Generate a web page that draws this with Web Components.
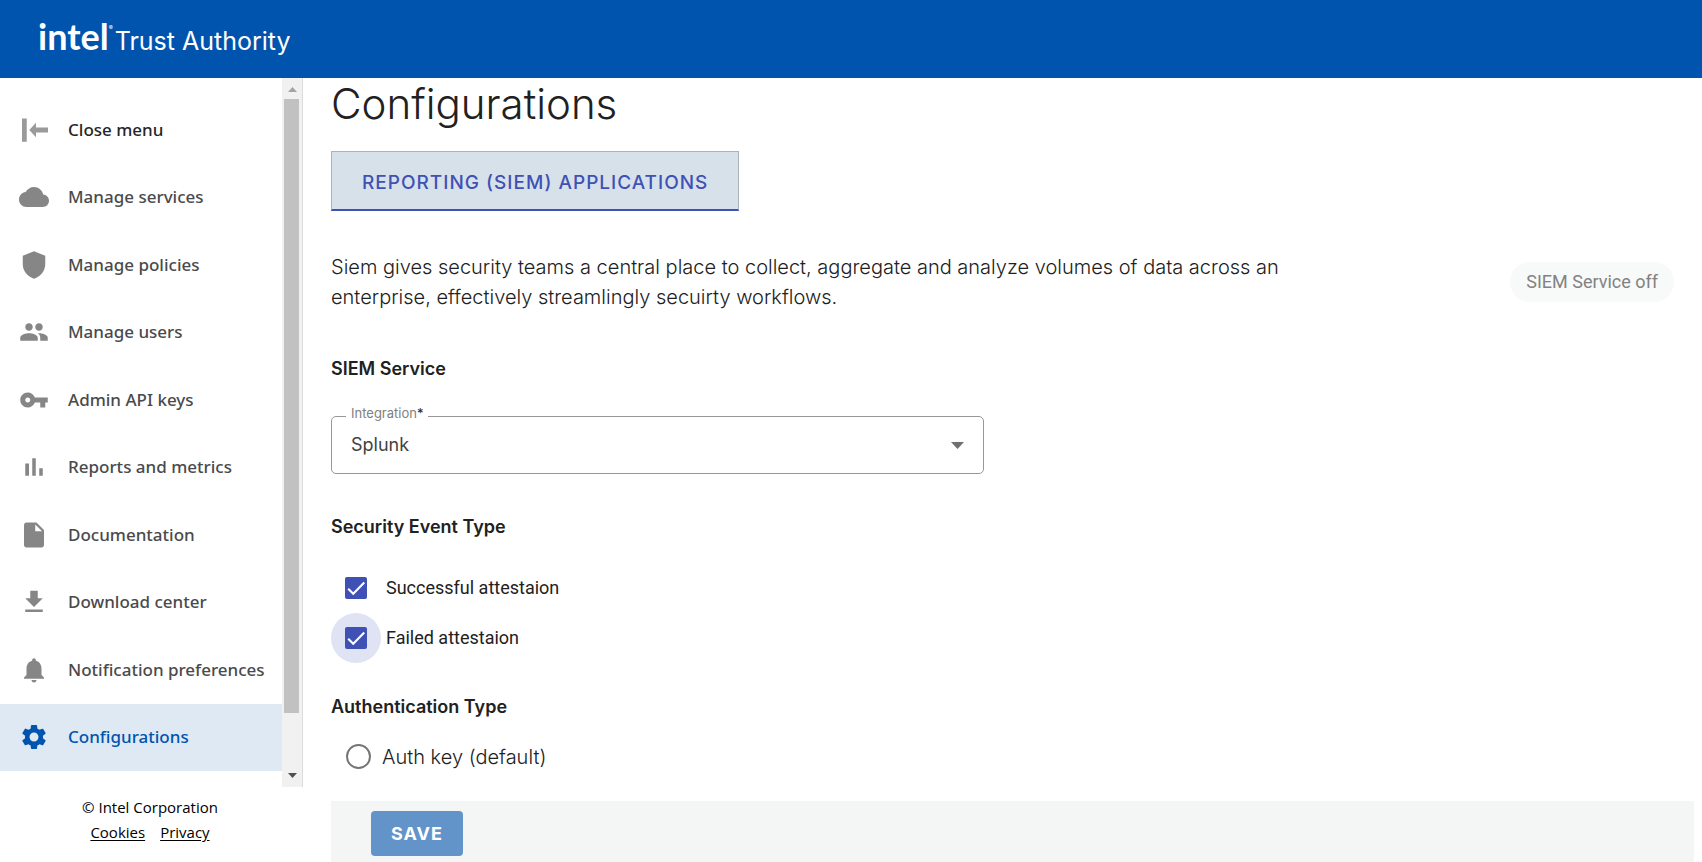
<!DOCTYPE html>
<html lang="en">
<head>
<meta charset="utf-8">
<meta name="viewport" content="width=device-width, initial-scale=1">
<title>Configurations - Intel Trust Authority</title>
<style>
  html, body { margin: 0; height: 100%; background: #fff; }
  body { font-family: Inter, "Noto Sans", sans-serif; color: #212121; }
</style>
</head>
<body>
<ta-app></ta-app>
<script>
const ICONS = {
  close: '<path fill="#9a9a9a" d="M2.4 2.8h3.8v18.6H2.4zM8.2 12l5.4-5.8V10h9.6v4h-9.6v3.8z"/>',
  cloud: '<path d="M19.35 10.04C18.67 6.59 15.64 4 12 4 9.11 4 6.6 5.64 5.35 8.04 2.34 8.36 0 10.91 0 14c0 3.31 2.69 6 6 6h13c2.76 0 5-2.24 5-5 0-2.64-2.05-4.78-4.65-4.96z"/>',
  shield: '<path d="M12 1L3 4.6v6.6c0 5.5 3.84 10.2 9 11.8 5.16-1.6 9-6.3 9-11.8V4.600z"/>',
  users: '<path d="M16 11c1.66 0 2.99-1.34 2.99-3S17.66 5 16 5s-3 1.34-3 3 1.34 3 3 3zm-8 0c1.66 0 2.99-1.34 2.99-3S9.66 5 8 5 5 6.34 5 8s1.34 3 3 3zm0 2c-2.33 0-7 1.17-7 3.5V19h14v-2.500c0-2.33-4.67-3.500-7-3.500zm8 0c-.29 0-.62.02-.97.05 1.16.84 1.97 1.970 1.970 3.450V19h6v-2.500c0-2.330-4.670-3.500-7-3.500z"/>',
  key: '<path d="M12.650 10C11.830 7.670 9.610 6 7 6c-3.310 0-6 2.690-6 6s2.690 6 6 6c2.610 0 4.830-1.670 5.650-4H17v4h4v-4h2v-4H12.650zM7 14c-1.100 0-2-.9-2-2s.9-2 2-2 2 .9 2 2-.9 2-2 2z"/>',
  chart: '<path d="M5 9.200h3V19H5zM10.600 5h2.800v14h-2.800zm5.600 8H19v6h-2.800z"/>',
  doc: '<path d="M6 2c-1.100 0-1.990.9-1.990 2L4 20c0 1.100.89 2 1.990 2H18c1.100 0 2-.9 2-2V8l-6-6H6zm7 7V3.500L18.500 9H13z"/>',
  download: '<path d="M19 9h-4V3H9v6H5l7 7 7-7zM5 18v2h14v-2H5z"/>',
  bell: '<path d="M12 22c1.100 0 2-.9 2-2h-4c0 1.100.89 2 2 2zm6-6v-5c0-3.070-1.640-5.640-4.500-6.320V4c0-.83-.67-1.500-1.500-1.500s-1.500.67-1.500 1.500v.68C7.630 5.360 6 7.920 6 11v5l-2 2v1h16v-1l-2-2z"/>',
  gear: '<path d="M19.140 12.940c.04-.3.06-.61.06-.94 0-.32-.02-.64-.07-.94l2.030-1.580c.18-.14.23-.41.12-.61l-1.920-3.320c-.12-.22-.37-.29-.59-.22l-2.390.96c-.5-.38-1.030-.7-1.620-.94l-.36-2.540c-.04-.24-.24-.41-.48-.41h-3.840c-.24 0-.43.17-.47.41l-.36 2.540c-.59.24-1.130.57-1.620.94l-2.390-.96c-.22-.08-.47 0-.59.22L2.740 8.870c-.12.21-.08.47.12.61l2.030 1.580c-.05.3-.09.63-.09.94s.02.64.07.94l-2.030 1.580c-.18.14-.23.41-.12.61l1.920 3.320c.12.22.37.29.59.22l2.390-.96c.5.38 1.030.7 1.620.94l.36 2.540c.05.24.24.41.48.41h3.840c.24 0 .44-.17.47-.41l.36-2.540c.59-.24 1.130-.56 1.620-.94l2.390.96c.22.08.47 0 .59-.22l1.920-3.320c.12-.22.07-.47-.12-.61l-2.010-1.580zM12 15.600c-1.980 0-3.600-1.620-3.600-3.600s1.620-3.600 3.600-3.600 3.600 1.620 3.600 3.600-1.620 3.600-3.600 3.600z"/>'
};

function define(name, render) {
  customElements.define(name, class extends HTMLElement {
    constructor() {
      super();
      this.attachShadow({ mode: 'open' });
    }
    connectedCallback() {
      if (!this.shadowRoot.childNodes.length) this.shadowRoot.innerHTML = render(this);
    }
  });
}

define('ta-header', () => `
  <style>
    :host { display: flex; align-items: baseline; gap: 2px; height: 78px; padding-left: 38px; box-sizing: border-box; flex: none;
            background: #0054ae; color: #fff; line-height: 72px; }
    .brand { font: 700 36px/72px Lato, sans-serif; }
    sup { font: 6px/6px Inter, sans-serif; vertical-align: 20px; }
    .product { font-size: 25px; }
  </style>
  <span class="brand">intel<sup>®</sup></span><span class="product">Trust Authority</span>`);

define('ta-nav-item', el => {
  const tag = el.hasAttribute('action') ? 'button' : 'a';
  const attrs = tag === 'a' ? 'href="#"' : 'type="button"';
  return `
  <style>
    :host { display: flex; flex: 1; color: #4a4a4d; --icon: #868686; }
    :host([action]) { color: #262626; }
    :host([active]) { color: #0054ae; --icon: #0054ae; background: #dfe9f4; }
    a, button { flex: 1; display: flex; align-items: center; gap: 19px; padding: 0 0 0 19px; border: 0; background: none;
      font: 500 17px/24px "Noto Sans", sans-serif; color: inherit; text-decoration: none; text-align: left; white-space: nowrap; cursor: pointer; }
    svg { width: 30px; height: 30px; fill: var(--icon); flex: none; }
  </style>
  <${tag} ${attrs}><svg viewBox="0 0 24 24" aria-hidden="true">${ICONS[el.getAttribute('icon')]}</svg><span><slot></slot></span></${tag}>`;
});

define('ta-scrollbar', () => `
  <style>
    :host { display: flex; flex-direction: column; width: 21px; background: #f1f1f1; flex: none; padding: 0 3px 0 2px; box-sizing: border-box; border-right: 1px solid #dcdcdc; }
    svg { width: 17px; height: 21px; flex: none; }
    .track { flex: 1; }
    .thumb { height: 92%; background: #c1c1c1; }
  </style>
  <svg viewBox="0 0 17 21" fill="#a3a3a3"><path d="M4 14h9L8.500 9z"/></svg>
  <div class="track"><div class="thumb"></div></div>
  <svg viewBox="0 0 17 21" fill="#505050"><path d="M4 7h9l-4.500 5z"/></svg>`);

define('ta-sidebar', () => `
  <style>
    :host { display: flex; flex-direction: column; width: 303px; flex: none; }
    .scroll { flex: 1; display: flex; min-height: 0; }
    nav { flex: 1; display: flex; flex-direction: column; padding: 18px 0 16px; min-width: 0; }
    footer { height: 75px; box-sizing: border-box; padding: 8px 3px 0 0; text-align: center; font: 15px/25px "Open Sans", sans-serif; font-size: 15px; color: #000; }
    footer div { display: flex; justify-content: center; gap: 15px; }
    a { color: inherit; text-underline-offset: 2px; }
  </style>
  <div class="scroll">
    <nav aria-label="Main">
      <ta-nav-item icon="close" action>Close menu</ta-nav-item>
      <ta-nav-item icon="cloud">Manage services</ta-nav-item>
      <ta-nav-item icon="shield">Manage policies</ta-nav-item>
      <ta-nav-item icon="users">Manage users</ta-nav-item>
      <ta-nav-item icon="key">Admin API keys</ta-nav-item>
      <ta-nav-item icon="chart">Reports and metrics</ta-nav-item>
      <ta-nav-item icon="doc">Documentation</ta-nav-item>
      <ta-nav-item icon="download">Download center</ta-nav-item>
      <ta-nav-item icon="bell">Notification preferences</ta-nav-item>
      <ta-nav-item icon="gear" active>Configurations</ta-nav-item>
    </nav>
    <ta-scrollbar></ta-scrollbar>
  </div>
  <footer>© Intel Corporation<div><a href="#">Cookies</a><a href="#">Privacy</a></div></footer>`);

define('ta-tab', () => `
  <style>
    :host { display: block; }
    button { height: 60px; padding: 4px 30px 0; border: 1px solid #aeb3b8; border-bottom: 2px solid #3f51b5; background: #d7e1ea;
      font: 500 19px/24px Inter, sans-serif; letter-spacing: 1px; color: #3f51b5; text-transform: uppercase; cursor: pointer; }
  </style>
  <button type="button" role="tab" aria-selected="true"><slot></slot></button>`);

define('ta-select', el => `
  <style>
    :host { display: block; position: relative; max-width: 653px; }
    select { display: block; width: 100%; height: 58px; padding: 0 19px; border: 1px solid #979797; border-radius: 5px; background: #fff;
      appearance: none; font: 18px/24px Inter, sans-serif; color: #424242; }
    label { position: absolute; left: 15px; top: -11px; padding: 0 5px; background: #fff; font: 13px/16px Inter, sans-serif; color: #808080; }
    b { font-weight: 400; color: #222; }
    svg { position: absolute; right: 20px; top: 26px; width: 13px; height: 7px; fill: #707070; pointer-events: none; }
  </style>
  <label for="s">${el.getAttribute('label')}<b>*</b></label>
  <select id="s" required><option>${el.getAttribute('value')}</option></select>
  <svg viewBox="0 0 13 7"><path d="M0 0h13L6.500 7z"/></svg>`);

define('ta-checkbox', () => `
  <style>
    :host { display: block; }
    label { display: flex; align-items: center; gap: 5px; height: 50px; font: 18px/24px Roboto, sans-serif; color: #212121; }
    .ripple { display: grid; place-items: center; width: 50px; height: 50px; border-radius: 50%; }
    :host([focused]) .ripple { background: #e0e3f3; }
    input { appearance: none; margin: 0; width: 22px; height: 22px; border-radius: 2px;
      background: #3f51b5 url('data:image/svg+xml,<svg xmlns="http://www.w3.org/2000/svg" viewBox="0 0 24 24"><path d="M3.500 12.700L9 18.200 21 6" fill="none" stroke="white" stroke-width="2.300"/></svg>'); }
  </style>
  <label><span class="ripple"><input type="checkbox" checked></span><slot></slot></label>`);

define('ta-radio', () => `
  <style>
    :host { display: block; }
    label { display: flex; align-items: center; gap: 11px; padding-left: 15px; font: 20px/24px Inter, sans-serif; font-weight: 300; color: #212121; }
    input { appearance: none; margin: 0; width: 25px; height: 25px; box-sizing: border-box; border: 2px solid #757575; border-radius: 50%; }
  </style>
  <label><input type="radio" name="auth"><slot></slot></label>`);

define('ta-chip', () => `
  <style>
    :host { display: block; flex: none; padding: 0 16px; border-radius: 20px; background: #f8f9f9; font: 18px/40px Roboto, sans-serif; color: #828282; }
  </style>
  <slot></slot>`);

define('ta-save-bar', () => `
  <style>
    :host { display: block; flex: none; height: 61px; box-sizing: border-box; padding: 10px 40px 0; margin-right: 8px; background: #f4f6f6; }
    button { height: 45px; padding: 0 20px; border: 0; border-radius: 4px; background: #6294ca; color: #fff;
      font: 700 18px/24px Inter, sans-serif; letter-spacing: 1px; cursor: pointer; }
  </style>
  <button type="submit"><slot></slot></button>`);

define('ta-configurations', () => `
  <style>
    :host { display: flex; flex-direction: column; flex: 1; min-width: 0; padding-left: 28px; }
    main { flex: 1; min-height: 0; overflow: hidden; padding-right: 28px; }
    h1 { margin: 0; font-size: 42px; font-weight: 300; line-height: 52px; }
    h2 { margin: 0; font-size: 18px; font-weight: 600; line-height: 24px; }
    ta-tab { margin-top: 21px; }
    .intro { display: flex; justify-content: space-between; align-items: center; margin: 41px 0 45px; }
    p { margin: 0; font-size: 20px; font-weight: 300; line-height: 30px; max-width: 990px; }
    ta-select { margin: 35px 0 41px; }
    .events { margin: 24px 0 32px; }
    ta-radio { margin-top: 25px; }
  </style>
  <main>
    <h1>Configurations</h1>
    <ta-tab>Reporting (SIEM) Applications</ta-tab>
    <div class="intro">
      <p>Siem gives security teams a central place to collect, aggregate and analyze volumes of data across an enterprise, effectively streamlingly secuirty workflows.</p>
      <ta-chip>SIEM Service off</ta-chip>
    </div>
    <h2>SIEM Service</h2>
    <ta-select label="Integration" value="Splunk"></ta-select>
    <h2>Security Event Type</h2>
    <div class="events">
      <ta-checkbox>Successful attestaion</ta-checkbox>
      <ta-checkbox focused>Failed attestaion</ta-checkbox>
    </div>
    <h2>Authentication Type</h2>
    <ta-radio>Auth key (default)</ta-radio>
  </main>
  <ta-save-bar>SAVE</ta-save-bar>`);

define('ta-app', () => `
  <style>
    :host { display: flex; flex-direction: column; height: 100vh; }
    .body { flex: 1; display: flex; min-height: 0; }
  </style>
  <ta-header></ta-header>
  <div class="body"><ta-sidebar></ta-sidebar><ta-configurations></ta-configurations></div>`);
</script>
</body>
</html>
